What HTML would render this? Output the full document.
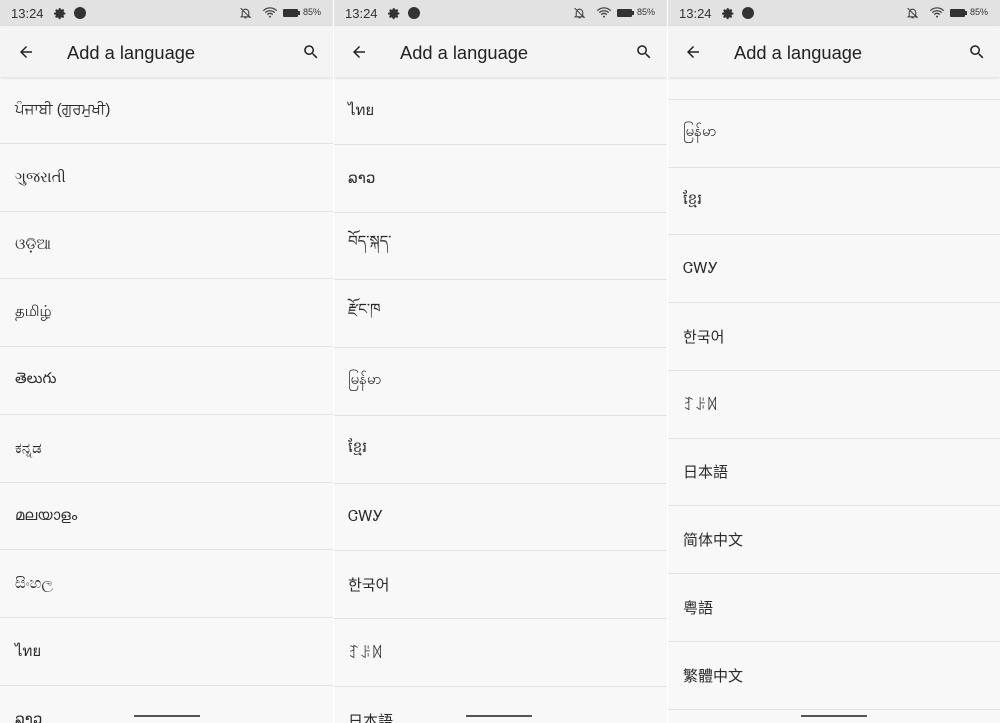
<!DOCTYPE html>
<html><head><meta charset="utf-8">
<style>
*{margin:0;padding:0;box-sizing:border-box}
html,body{width:1000px;height:723px;overflow:hidden}
body{background:#fff;font-family:"Liberation Sans","DejaVu Sans","Noto Sans CJK SC",sans-serif;position:relative}
.p{position:absolute;top:0;width:333px;height:723px;background:#f8f8f8;overflow:hidden}
.sb{position:absolute;top:0;left:0;right:0;height:26px;background:#e2e2e2;color:#333;font-size:13px}
.sb .t{position:absolute;left:11px;top:6px}
.tb{position:absolute;top:26px;left:0;right:0;height:51px;background:#f4f4f4;box-shadow:0 1px 3px rgba(0,0,0,.12);z-index:2}
.tb .ti{position:absolute;left:67px;top:16px;font-size:18.3px;color:#222}
.list{position:absolute;left:0;right:0;height:760px;overflow:hidden}
.r{height:67.75px;border-bottom:1px solid #e3e3e3;padding-left:15px;font-size:15px;color:#2a2a2a;display:flex;align-items:center}
.home{position:absolute;bottom:6px;left:134px;width:66px;height:2px;background:#555;z-index:3}
</style></head><body>

<div class="p" style="left:0">
 <div class="sb"><span class="t">13:24</span>
  <svg style="position:absolute;left:54px;top:7px" width="13" height="13" viewBox="0 0 24 24"><path fill="#333" d="M12 8a4 4 0 100 8 4 4 0 000-8zm9 5.5v-3l-2.6-.6-.8-1.9 1.4-2.3-2.1-2.1-2.3 1.4-1.9-.8L12.1 2h-3l-.6 2.6-1.9.8-2.3-1.4-2.1 2.1 1.4 2.3-.8 1.9L0 10.5v3l2.6.6.8 1.9-1.4 2.3 2.1 2.1 2.3-1.4 1.9.8.6 2.6h3l.6-2.6 1.9-.8 2.3 1.4 2.1-2.1-1.4-2.3.8-1.9z"/></svg>
  <span style="position:absolute;left:74px;top:7px;width:12px;height:12px;border-radius:50%;background:#333"></span>
  <svg style="position:absolute;left:239px;top:6px" width="13" height="14" viewBox="0 0 24 24"><path fill="none" stroke="#444" stroke-width="2" d="M6 17V11a6 6 0 0112 0v6l2 2H4zM10 21h4M3 3l18 18"/></svg>
  <svg style="position:absolute;left:262px;top:5px" width="16" height="14" viewBox="0 0 24 20"><path fill="none" stroke="#444" stroke-width="2" d="M2 8a14 14 0 0120 0M5 11a10 10 0 0114 0M8 14a5 5 0 018 0"/><circle cx="12" cy="17" r="1.5" fill="#444"/></svg>
  <span style="position:absolute;left:283px;top:9px;width:15px;height:8px;background:#333;border-radius:1px"></span><span style="position:absolute;left:298px;top:11px;width:2px;height:4px;background:#333"></span>
  <span style="position:absolute;left:303px;top:7px;font-size:9px">85%</span>
 </div>
 <div class="tb">
  <svg style="position:absolute;left:17px;top:17px" width="18" height="18" viewBox="0 0 24 24"><path fill="#222" d="M20 11H7.8l5.6-5.6L12 4l-8 8 8 8 1.4-1.4L7.8 13H20z"/></svg>
  <span class="ti">Add a language</span>
  <svg style="position:absolute;left:302px;top:17px" width="18" height="18" viewBox="0 0 24 24"><path fill="#222" d="M15.5 14h-.8l-.3-.3A6.5 6.5 0 109.5 16a6.5 6.5 0 004.2-1.6l.3.3v.8l5 5 1.5-1.5-5-5zm-6 0a4.5 4.5 0 110-9 4.5 4.5 0 010 9z"/></svg>
 </div>
 <div class="list" style="top:76px">
  <div class="r">ਪੰਜਾਬੀ (ਗੁਰਮੁਖੀ)</div><div class="r">ગુજરાતી</div><div class="r">ଓଡ଼ିଆ</div><div class="r">தமிழ்</div><div class="r">తెలుగు</div><div class="r">ಕನ್ನಡ</div><div class="r">മലയാളം</div><div class="r">සිංහල</div><div class="r">ไทย</div><div class="r">ລາວ</div>
 </div>
 <div class="home"></div>
</div>

<div class="p" style="left:334px">
 <div class="sb"><span class="t">13:24</span>
  <svg style="position:absolute;left:54px;top:7px" width="13" height="13" viewBox="0 0 24 24"><path fill="#333" d="M12 8a4 4 0 100 8 4 4 0 000-8zm9 5.5v-3l-2.6-.6-.8-1.9 1.4-2.3-2.1-2.1-2.3 1.4-1.9-.8L12.1 2h-3l-.6 2.6-1.9.8-2.3-1.4-2.1 2.1 1.4 2.3-.8 1.9L0 10.5v3l2.6.6.8 1.9-1.4 2.3 2.1 2.1 2.3-1.4 1.9.8.6 2.6h3l.6-2.6 1.9-.8 2.3 1.4 2.1-2.1-1.4-2.3.8-1.9z"/></svg>
  <span style="position:absolute;left:74px;top:7px;width:12px;height:12px;border-radius:50%;background:#333"></span>
  <svg style="position:absolute;left:239px;top:6px" width="13" height="14" viewBox="0 0 24 24"><path fill="none" stroke="#444" stroke-width="2" d="M6 17V11a6 6 0 0112 0v6l2 2H4zM10 21h4M3 3l18 18"/></svg>
  <svg style="position:absolute;left:262px;top:5px" width="16" height="14" viewBox="0 0 24 20"><path fill="none" stroke="#444" stroke-width="2" d="M2 8a14 14 0 0120 0M5 11a10 10 0 0114 0M8 14a5 5 0 018 0"/><circle cx="12" cy="17" r="1.5" fill="#444"/></svg>
  <span style="position:absolute;left:283px;top:9px;width:15px;height:8px;background:#333;border-radius:1px"></span><span style="position:absolute;left:298px;top:11px;width:2px;height:4px;background:#333"></span>
  <span style="position:absolute;left:303px;top:7px;font-size:9px">85%</span>
 </div>
 <div class="tb">
  <svg style="position:absolute;left:16px;top:17px" width="18" height="18" viewBox="0 0 24 24"><path fill="#222" d="M20 11H7.8l5.6-5.6L12 4l-8 8 8 8 1.4-1.4L7.8 13H20z"/></svg>
  <span class="ti" style="left:66px">Add a language</span>
  <svg style="position:absolute;left:301px;top:17px" width="18" height="18" viewBox="0 0 24 24"><path fill="#222" d="M15.5 14h-.8l-.3-.3A6.5 6.5 0 109.5 16a6.5 6.5 0 004.2-1.6l.3.3v.8l5 5 1.5-1.5-5-5zm-6 0a4.5 4.5 0 110-9 4.5 4.5 0 010 9z"/></svg>
 </div>
 <div class="list" style="top:77px">
  <div class="r" style="padding-left:14px">ไทย</div><div class="r" style="padding-left:14px">ລາວ</div><div class="r" style="padding-left:14px">བོད་སྐད་</div><div class="r" style="padding-left:14px">རྫོང་ཁ</div><div class="r" style="padding-left:14px">မြန်မာ</div><div class="r" style="padding-left:14px">ខ្មែរ</div><div class="r" style="padding-left:14px">ᏣᎳᎩ</div><div class="r" style="padding-left:14px">한국어</div><div class="r" style="padding-left:14px">ꆈꌠꉙ</div><div class="r" style="padding-left:14px">日本語</div>
 </div>
 <div class="home" style="left:132px"></div>
</div>

<div class="p" style="left:668px;width:332px">
 <div class="sb"><span class="t">13:24</span>
  <svg style="position:absolute;left:54px;top:7px" width="13" height="13" viewBox="0 0 24 24"><path fill="#333" d="M12 8a4 4 0 100 8 4 4 0 000-8zm9 5.5v-3l-2.6-.6-.8-1.9 1.4-2.3-2.1-2.1-2.3 1.4-1.9-.8L12.1 2h-3l-.6 2.6-1.9.8-2.3-1.4-2.1 2.1 1.4 2.3-.8 1.9L0 10.5v3l2.6.6.8 1.9-1.4 2.3 2.1 2.1 2.3-1.4 1.9.8.6 2.6h3l.6-2.6 1.9-.8 2.3 1.4 2.1-2.1-1.4-2.3.8-1.9z"/></svg>
  <span style="position:absolute;left:74px;top:7px;width:12px;height:12px;border-radius:50%;background:#333"></span>
  <svg style="position:absolute;left:238px;top:6px" width="13" height="14" viewBox="0 0 24 24"><path fill="none" stroke="#444" stroke-width="2" d="M6 17V11a6 6 0 0112 0v6l2 2H4zM10 21h4M3 3l18 18"/></svg>
  <svg style="position:absolute;left:261px;top:5px" width="16" height="14" viewBox="0 0 24 20"><path fill="none" stroke="#444" stroke-width="2" d="M2 8a14 14 0 0120 0M5 11a10 10 0 0114 0M8 14a5 5 0 018 0"/><circle cx="12" cy="17" r="1.5" fill="#444"/></svg>
  <span style="position:absolute;left:282px;top:9px;width:15px;height:8px;background:#333;border-radius:1px"></span><span style="position:absolute;left:297px;top:11px;width:2px;height:4px;background:#333"></span>
  <span style="position:absolute;left:302px;top:7px;font-size:9px">85%</span>
 </div>
 <div class="tb">
  <svg style="position:absolute;left:16px;top:17px" width="18" height="18" viewBox="0 0 24 24"><path fill="#222" d="M20 11H7.8l5.6-5.6L12 4l-8 8 8 8 1.4-1.4L7.8 13H20z"/></svg>
  <span class="ti" style="left:66px">Add a language</span>
  <svg style="position:absolute;left:300px;top:17px" width="18" height="18" viewBox="0 0 24 24"><path fill="#222" d="M15.5 14h-.8l-.3-.3A6.5 6.5 0 109.5 16a6.5 6.5 0 004.2-1.6l.3.3v.8l5 5 1.5-1.5-5-5zm-6 0a4.5 4.5 0 110-9 4.5 4.5 0 010 9z"/></svg>
 </div>
 <div class="list" style="top:32px">
  <div class="r"></div><div class="r">မြန်မာ</div><div class="r">ខ្មែរ</div><div class="r">ᏣᎳᎩ</div><div class="r">한국어</div><div class="r">ꆈꌠꉙ</div><div class="r">日本語</div><div class="r">简体中文</div><div class="r">粤語</div><div class="r">繁體中文</div><div class="r"></div>
 </div>
 <div class="home" style="left:133px"></div>
</div>
</body></html>
